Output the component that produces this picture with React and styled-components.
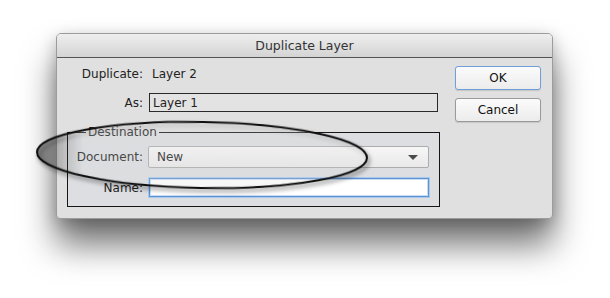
import React from "react";
import styled, { createGlobalStyle } from "styled-components";

const Global = createGlobalStyle`
  html, body { margin: 0; padding: 0; background: #ffffff; }
  body { width: 610px; height: 298px; overflow: hidden; font-family: "DejaVu Sans", "Liberation Sans", sans-serif; }
  * { box-sizing: border-box; }
`;

const Page = styled.div`
  position: relative;
  width: 610px;
  height: 298px;
  padding: 33px 0 0 56px;
`;

const Window = styled.div`
  width: 497px;
  height: 186px;
  display: flex;
  flex-direction: column;
  background: #e0e0e0;
  border: 1px solid #9c9c9c;
  border-radius: 5px 5px 4px 4px;
  box-shadow: 0 26px 34px rgba(0, 0, 0, 0.55), 0 4px 16px rgba(0, 0, 0, 0.22);
  overflow: hidden;
`;

const TitleBar = styled.div`
  flex: none;
  height: 24px;
  display: flex;
  align-items: center;
  justify-content: center;
  background: linear-gradient(#eeeeee, #d4d4d4);
  border-bottom: 1px solid #555555;
  font-size: 12.5px;
  color: #333333;
`;

const Body = styled.div`
  flex: 1;
  display: flex;
  gap: 15px;
  padding: 0 11px 0 0;
`;

const FormColumn = styled.div`
  width: 383px;
  display: flex;
  flex-direction: column;
  padding: 8px 0 0 10px;
`;

const Row = styled.div`
  display: flex;
  align-items: center;
  height: ${(p) => p.$h || 19}px;
  margin-top: ${(p) => p.$mt || 0}px;
  gap: ${(p) => (p.$gap != null ? p.$gap : 6)}px;
`;

const Label = styled.div`
  width: ${(p) => p.$w || 76}px;
  flex: none;
  text-align: right;
  font-size: 12px;
  color: #222222;
  white-space: nowrap;
`;

const Value = styled.div`
  font-size: 12px;
  color: #222222;
  padding-left: 3px;
`;

const ReadField = styled.div`
  width: 289px;
  height: 19px;
  display: flex;
  align-items: center;
  padding-left: 3px;
  border: 1px solid #2a2a2a;
  background: #e3e3e3;
  font-size: 12px;
  color: #222222;
`;

const Group = styled.fieldset`
  margin: 13px 0 0 0;
  width: 373px;
  padding: 7px 9px 9px 0;
  border: 1px solid #151515;
  background: #dcdee1;
  display: flex;
  flex-direction: column;
  min-width: 0;
`;

const Legend = styled.legend`
  margin-left: 18px;
  padding: 0 2px;
  font-size: 12px;
  line-height: 14px;
  color: #222222;
`;

const Popup = styled.div`
  width: 281px;
  height: 22px;
  display: flex;
  align-items: center;
  justify-content: space-between;
  padding: 0 10px 0 8px;
  border: 1px solid #acacac;
  border-radius: 2px;
  background: linear-gradient(#f6f6f6, #e9e9e9);
  font-size: 12px;
  color: #222222;
`;

const Arrow = styled.span`
  width: 0;
  height: 0;
  border-left: 5px solid transparent;
  border-right: 5px solid transparent;
  border-top: 5px solid #4a4a4a;
`;

const TextField = styled.div`
  width: 280px;
  height: 19px;
  margin-left: 1px;
  background: #ffffff;
  border: 1px solid #5d93d3;
  box-shadow: 0 0 0 1px #a8c8ee, inset 0 0 0 1px #c9dcf3;
`;

const ButtonColumn = styled.div`
  width: 87px;
  display: flex;
  flex-direction: column;
  gap: 8px;
  padding-top: 8px;
`;

const Button = styled.div`
  height: 24px;
  display: flex;
  align-items: center;
  justify-content: center;
  border: 1px solid ${(p) => (p.$default ? "#6f9fd6" : "#9a9a9a")};
  border-radius: 3px;
  background: linear-gradient(#fbfbfb, #ececec);
  box-shadow: 0 1px 1px rgba(0, 0, 0, 0.12);
  font-size: 12px;
  color: #111111;
`;

const Annotation = styled.svg`
  position: absolute;
  left: 0;
  top: 0;
  pointer-events: none;
`;

export default function App() {
  return (
    <Page>
      <Global />
      <Window>
        <TitleBar>Duplicate Layer</TitleBar>
        <Body>
          <FormColumn>
            <Row $h={16}>
              <Label>Duplicate:</Label>
              <Value>Layer 2</Value>
            </Row>
            <Row $h={19} $mt={11}>
              <Label>As:</Label>
              <ReadField>Layer 1</ReadField>
            </Row>
            <Group>
              <Legend>Destination</Legend>
              <Row $h={22} $gap={5}>
                <Label $w={75}>Document:</Label>
                <Popup>
                  New
                  <Arrow />
                </Popup>
              </Row>
              <Row $h={19} $mt={10} $gap={5}>
                <Label $w={75}>Name:</Label>
                <TextField />
              </Row>
            </Group>
          </FormColumn>
          <ButtonColumn>
            <Button $default>OK</Button>
            <Button>Cancel</Button>
          </ButtonColumn>
        </Body>
      </Window>
      <Annotation width="610" height="298" viewBox="0 0 610 298">
        <defs>
          <linearGradient id="ellFill" x1="0" y1="0" x2="1" y2="0">
            <stop offset="0" stopColor="#000" stopOpacity="0.4" />
            <stop offset="0.07" stopColor="#000" stopOpacity="0.12" />
            <stop offset="0.14" stopColor="#fff" stopOpacity="0.14" />
            <stop offset="1" stopColor="#fff" stopOpacity="0.14" />
          </linearGradient>
          <filter id="ellShadow" x="-10%" y="-40%" width="120%" height="180%">
            <feDropShadow dx="2" dy="3" stdDeviation="2" floodColor="#000" floodOpacity="0.5" />
          </filter>
        </defs>
        <ellipse
          cx="202"
          cy="155"
          rx="165"
          ry="33"
          transform="rotate(1 202 155)"
          fill="url(#ellFill)"
          stroke="#111"
          strokeWidth="2"
          filter="url(#ellShadow)"
        />
      </Annotation>
    </Page>
  );
}
